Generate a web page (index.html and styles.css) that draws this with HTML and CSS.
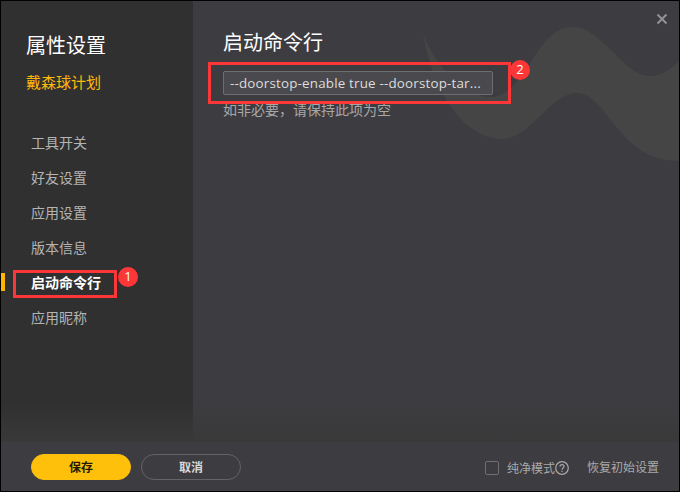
FILE: index.html
```
<!DOCTYPE html>
<html lang="zh-CN">
<head>
<meta charset="utf-8">
<title>属性设置</title>
<link rel="stylesheet" href="styles.css">
</head>
<body>
<div class="dialog">
  <div class="body">
    <nav class="sidebar">
      <h1 class="title">属性设置</h1>
      <div class="game">戴森球计划</div>
      <ul class="menu">
        <li>工具开关</li>
        <li>好友设置</li>
        <li>应用设置</li>
        <li>版本信息</li>
        <li class="active">启动命令行<span class="mark mark-menu"><b class="badge">1</b></span></li>
        <li>应用昵称</li>
      </ul>
    </nav>
    <main class="content">
      <svg class="wave" width="256" height="150" viewBox="0 0 256 150"><path d="M0 13C8 38 38 78 67 77C104 76 112 7 149 7C180 7 200 56 227 56C237 56 246 51 256 41V141C195 141 184 73 154 73C127 73 108 119 79 119C49 119 12 86 0 13Z"/></svg>
      <h2 class="title">启动命令行</h2>
      <div class="field"><span class="value">--doorstop-enable true --doorstop-tar...</span><span class="mark mark-field"><b class="badge">2</b></span></div>
      <p class="hint">如非必要，请保持此项为空</p>
      <svg class="close" width="12" height="12" viewBox="0 0 12 12"><path d="M1.5 1.5L10.5 10.5M10.5 1.5L1.5 10.5"/></svg>
    </main>
  </div>
  <footer class="footer">
    <button class="btn save">保存</button>
    <button class="btn cancel">取消</button>
    <span class="box"></span>
    <span class="mode">纯净模式</span>
    <svg class="help" width="14" height="14" viewBox="0 0 14 14"><circle cx="7" cy="7" r="6.3"/><path d="M5 5.6C5 3 9 3 9 5.4C9 6.9 7 6.9 7 8.7M7 9.8V11"/></svg>
    <span class="reset">恢复初始设置</span>
  </footer>
</div>
</body>
</html>
```
FILE: styles.css
```
* { box-sizing: border-box; margin: 0; padding: 0; }
body {
  font-family: "Noto Sans CJK SC", sans-serif;
  background: #000;
}
.dialog {
  width: 680px;
  height: 492px;
  border: 1px solid #000;
  background: #3d3c40;
  display: flex;
  flex-direction: column;
}
.body { position: relative; display: flex; height: 441px; }
.body::after {
  content: "";
  position: absolute;
  inset: auto 0 0 0;
  height: 40px;
  background: linear-gradient(rgba(57, 57, 58, 0), #39393a);
}
.sidebar { width: 192px; background: #303031; padding-top: 29px; }
.title { font-size: 20px; line-height: 30px; font-weight: 400; color: #fff; }
.sidebar .title, .game { padding-left: 25px; }
.game { margin-top: 11px; font-size: 15px; line-height: 22px; color: #ffb90a; }
.menu { list-style: none; margin-top: 32px; font-size: 14px; line-height: 35px; color: #b4b4b4; }
.menu li { position: relative; height: 35px; padding-left: 30px; }
.menu .active { font-weight: 700; color: #fff; }
.active::before {
  content: "";
  position: absolute;
  left: 0;
  top: 8px;
  width: 4px;
  height: 18px;
  background: #ffb400;
}
.mark { position: absolute; border: 3px solid #fd3638; }
.mark-menu { left: 12px; top: 5px; width: 104px; height: 28px; }
.mark-field { left: -16px; top: -10px; width: 303px; height: 42px; }
.badge {
  position: absolute;
  width: 20px;
  height: 20px;
  border-radius: 50%;
  background: #fd3638;
  color: #fff;
  font: 400 13px/18px "Open Sans", sans-serif;
  text-align: center;
}
.mark-menu .badge { left: 102px; top: -6px; }
.mark-field .badge { left: 299px; top: -5px; }
.content { position: relative; z-index: 0; flex: 1; padding: 26px 0 0 30px; }
.content .title, .field, .hint { position: relative; }
.wave { position: absolute; right: 0; top: 19px; fill: #454546; }
.field {
  width: 270px;
  height: 24px;
  margin-top: 14px;
  padding-left: 6px;
  border: 1px solid #6e6e72;
  border-radius: 2px;
  background: #4a494e;
}
.value {
  display: block;
  font: 13.4px/22px "Open Sans", sans-serif;
  letter-spacing: 0.18px;
  color: #ddd;
  white-space: nowrap;
}
.hint { margin-top: 3px; font-size: 14px; line-height: 22px; color: #a8a8a9; z-index: -1; }
.close { position: absolute; right: 11px; top: 12px; stroke: #929294; stroke-width: 2; fill: none; }
.footer { height: 49px; display: flex; align-items: center; padding: 0 20px 0 30px; font-size: 12px; color: #aaaaab; }
.btn {
  width: 100px;
  height: 26px;
  border-radius: 13px;
  border: 1px solid #646468;
  background: none;
  font: 700 12px/24px "Noto Sans CJK SC", sans-serif;
}
.save { background: #ffc00b; border-color: #ffc00b; color: #241b02; }
.cancel { margin-left: 10px; color: #d8d8d8; }
.box { width: 14px; height: 14px; margin-left: 244px; margin-top: 3px; border: 1px solid #707074; border-radius: 2px; }
.mode { margin-left: 8px; margin-top: 2px; }
.help { margin-top: 3px; fill: none; stroke: #aaaaab; stroke-width: 1.2; }
.reset { margin-left: auto; margin-top: -1px; }
```
